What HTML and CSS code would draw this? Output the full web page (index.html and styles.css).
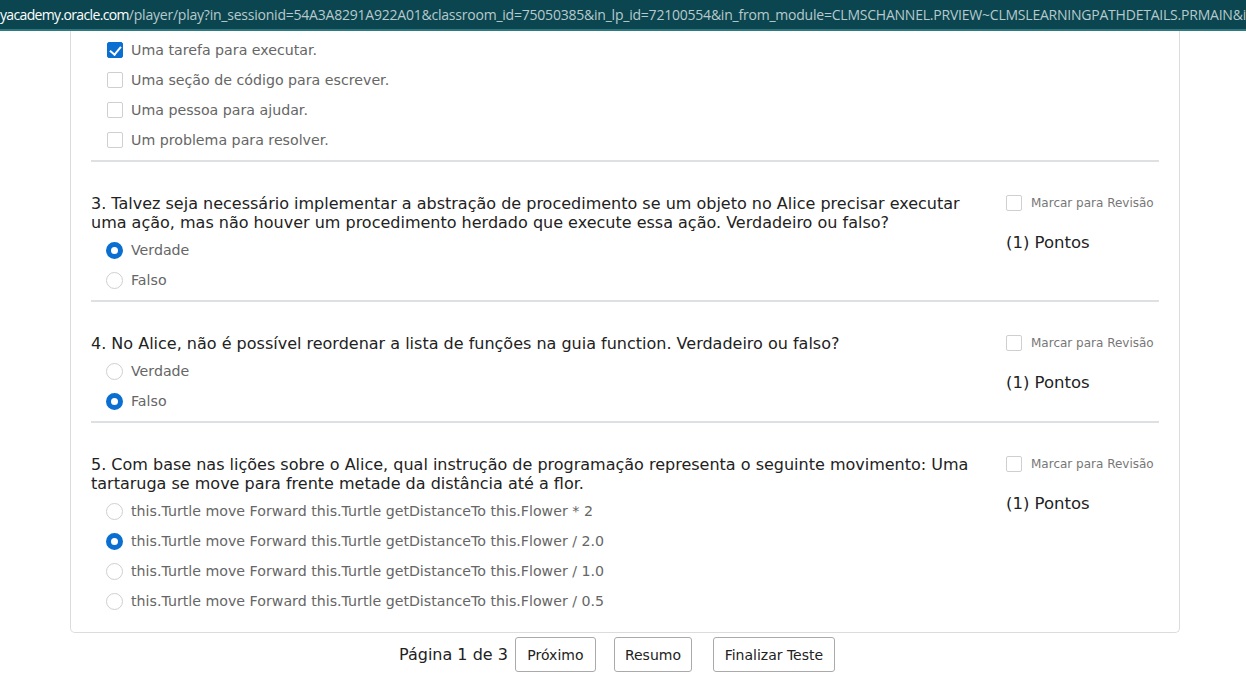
FILE: index.html
```html
<!DOCTYPE html>
<html lang="pt">
<head>
<meta charset="utf-8">
<title>Teste</title>
<link rel="stylesheet" href="styles.css">
</head>
<body>
<div class="urlbar"><span class="host">yacademy.oracle.com</span><span class="path">/player/play?in_sessionid=54A3A8291A922A01&amp;classroom_id=75050385&amp;in_lp_id=72100554&amp;in_from_module=CLMSCHANNEL.PRVIEW~CLMSLEARNINGPATHDETAILS.PRMAIN&amp;in_</span></div>
<div class="page">
  <div class="card">
    <div class="block first">
      <div class="qmain">
        <div class="opts">
          <div class="opt"><span class="cb checked"></span><span>Uma tarefa para executar.</span></div>
          <div class="opt"><span class="cb"></span><span>Uma seção de código para escrever.</span></div>
          <div class="opt"><span class="cb"></span><span>Uma pessoa para ajudar.</span></div>
          <div class="opt"><span class="cb"></span><span>Um problema para resolver.</span></div>
        </div>
      </div>
    </div>
    <div class="block">
      <div class="qmain">
        <div class="qtext">3. Talvez seja necessário implementar a abstração de procedimento se um objeto no Alice precisar executar uma ação, mas não houver um procedimento herdado que execute essa ação. Verdadeiro ou falso?</div>
        <div class="opts">
          <div class="opt"><span class="rb checked"></span><span>Verdade</span></div>
          <div class="opt"><span class="rb"></span><span>Falso</span></div>
        </div>
      </div>
      <div class="qside">
        <div class="mark"><span class="cb"></span><span>Marcar para Revisão</span></div>
        <div class="points">(1) Pontos</div>
      </div>
    </div>
    <div class="block">
      <div class="qmain">
        <div class="qtext">4. No Alice, não é possível reordenar a lista de funções na guia function. Verdadeiro ou falso?</div>
        <div class="opts">
          <div class="opt"><span class="rb"></span><span>Verdade</span></div>
          <div class="opt"><span class="rb checked"></span><span>Falso</span></div>
        </div>
      </div>
      <div class="qside">
        <div class="mark"><span class="cb"></span><span>Marcar para Revisão</span></div>
        <div class="points">(1) Pontos</div>
      </div>
    </div>
    <div class="block last">
      <div class="qmain">
        <div class="qtext">5. Com base nas lições sobre o Alice, qual instrução de programação representa o seguinte movimento: Uma tartaruga se move para frente metade da distância até a flor.</div>
        <div class="opts">
          <div class="opt"><span class="rb"></span><span>this.Turtle move Forward this.Turtle getDistanceTo this.Flower * 2</span></div>
          <div class="opt"><span class="rb checked"></span><span>this.Turtle move Forward this.Turtle getDistanceTo this.Flower / 2.0</span></div>
          <div class="opt"><span class="rb"></span><span>this.Turtle move Forward this.Turtle getDistanceTo this.Flower / 1.0</span></div>
          <div class="opt"><span class="rb"></span><span>this.Turtle move Forward this.Turtle getDistanceTo this.Flower / 0.5</span></div>
        </div>
      </div>
      <div class="qside">
        <div class="mark"><span class="cb"></span><span>Marcar para Revisão</span></div>
        <div class="points">(1) Pontos</div>
      </div>
    </div>
  </div>
  <div class="footer">
    <span class="pageinfo">Página 1 de 3</span>
    <button class="btn b1">Próximo</button>
    <button class="btn b2">Resumo</button>
    <button class="btn b3">Finalizar Teste</button>
  </div>
</div>
</body>
</html>
```
FILE: styles.css
```css
* { box-sizing: border-box; }
html, body { margin: 0; padding: 0; background: #fff; overflow: hidden; }
body { font-family: "DejaVu Sans", Verdana, sans-serif; color: #222; }

.urlbar {
  height: 31px;
  background: #0b4650;
  border-bottom: 2px solid #2f7a80;
  font-family: "Open Sans", "Liberation Sans", sans-serif;
  font-size: 14px;
  line-height: 29px;
  white-space: nowrap;
  overflow: hidden;
}
.host { color: #ffffff; letter-spacing: -0.65px; }
.path { color: #b7c9cc; letter-spacing: -0.22px; }

.page { width: 1110px; margin-left: 70px; }
.card {
  border: 1px solid #dcdcdc;
  border-top: none;
  border-radius: 0 0 5px 5px;
  padding: 0 20px 14px 20px;
}
.block {
  display: flex;
  border-bottom: 2px solid #dde1e4;
  padding: 32px 0 5px 0;
}
.block.first { padding-top: 4px; }
.block.last { border-bottom: none; padding-bottom: 2px; }
.qmain { flex: 1; }
.qtext { font-size: 16px; line-height: 19px; color: #222; padding-right: 20px; margin-bottom: 3px; }
.opts { padding-left: 15px; }
.opt {
  display: flex;
  align-items: center;
  height: 30px;
  font-size: 14.2px;
  color: #666;
}
.cb {
  width: 16px; height: 16px;
  border: 1px solid #cfcfcf;
  border-radius: 2px;
  margin-right: 8px;
  margin-left: 1px;
  flex: none;
  background: #fff;
  position: relative;
}
.cb.checked { background: #0b6fd1; border-color: #0b6fd1; }
.cb.checked::after {
  content: "";
  position: absolute;
  left: 4px; top: 1px;
  width: 5px; height: 9px;
  border: solid #fff;
  border-width: 0 2.5px 2.5px 0;
  transform: rotate(40deg);
}
.rb {
  width: 17px; height: 17px;
  border: 1px solid #cfcfcf;
  border-radius: 50%;
  margin-right: 8px;
  flex: none;
  background: #fff;
}
.rb.checked { border: 5px solid #0b6fd1; }

.qside { width: 153px; flex: none; padding-top: 0; }
.mark {
  display: flex; align-items: center;
  font-size: 12px; color: #777;
  height: 17px;
}
.mark .cb { margin-left: 0; margin-right: 9px; }
.points { font-size: 16.5px; line-height: 19px; margin-top: 22px; color: #222; }

.footer {
  display: flex;
  align-items: center;
  padding-top: 4px;
  padding-left: 329px;
}
.pageinfo { font-size: 16px; color: #222; margin-right: 6px; }
.btn {
  font-family: "DejaVu Sans", Verdana, sans-serif;
  font-size: 14px;
  color: #222;
  background: #fff;
  border: 1px solid #aaa;
  border-radius: 3px;
  height: 35px;
  padding: 0 10px;
}
.b1 { width: 81px; margin-left: 1px; margin-right: 18px; }
.b2 { width: 78px; margin-right: 21px; }
.b3 { width: 122px; }
```
